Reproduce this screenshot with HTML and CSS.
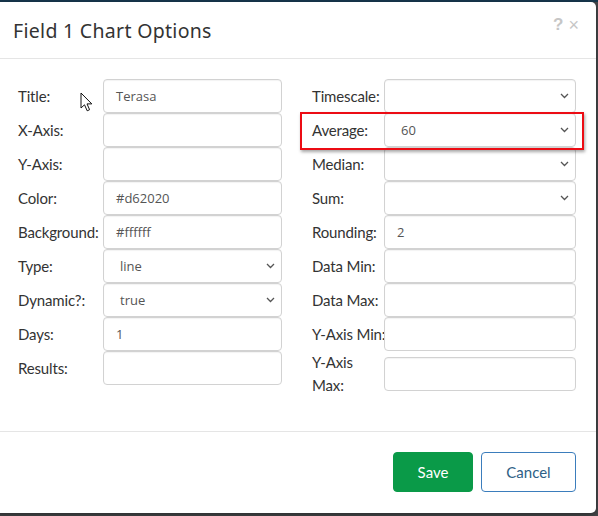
FILE: index.html
```html
<!DOCTYPE html>
<html>
<head>
<meta charset="utf-8">
<link rel="stylesheet" href="styles.css">
</head>
<body>
<div class="page">
  <div class="modal">
    <div class="modal-header">
      <h4 class="modal-title">Field 1 Chart Options</h4>
      <div class="tools"><span class="help">?</span><span class="close">×</span></div>
    </div>
    <div class="modal-body">
      <div class="col col-left">
        <div class="row"><label>Title:</label><div class="input">Terasa</div></div>
        <div class="row"><label>X-Axis:</label><div class="input"></div></div>
        <div class="row"><label>Y-Axis:</label><div class="input"></div></div>
        <div class="row"><label>Color:</label><div class="input">#d62020</div></div>
        <div class="row"><label>Background:</label><div class="input">#ffffff</div></div>
        <div class="row"><label>Type:</label><div class="select"><span>line</span><svg class="chev" width="9" height="6" viewBox="0 0 9 6"><path d="M1 1 L4.5 4.5 L8 1" fill="none" stroke="#555" stroke-width="1.3"/></svg></div></div>
        <div class="row"><label>Dynamic?:</label><div class="select"><span>true</span><svg class="chev" width="9" height="6" viewBox="0 0 9 6"><path d="M1 1 L4.5 4.5 L8 1" fill="none" stroke="#555" stroke-width="1.3"/></svg></div></div>
        <div class="row"><label>Days:</label><div class="input">1</div></div>
        <div class="row"><label>Results:</label><div class="input"></div></div>
      </div>
      <div class="col col-right">
        <div class="row"><label>Timescale:</label><div class="select"><span></span><svg class="chev" width="9" height="6" viewBox="0 0 9 6"><path d="M1 1 L4.5 4.5 L8 1" fill="none" stroke="#555" stroke-width="1.3"/></svg></div></div>
        <div class="row"><label>Average:</label><div class="select"><span>60</span><svg class="chev" width="9" height="6" viewBox="0 0 9 6"><path d="M1 1 L4.5 4.5 L8 1" fill="none" stroke="#555" stroke-width="1.3"/></svg></div></div>
        <div class="row"><label>Median:</label><div class="select"><span></span><svg class="chev" width="9" height="6" viewBox="0 0 9 6"><path d="M1 1 L4.5 4.5 L8 1" fill="none" stroke="#555" stroke-width="1.3"/></svg></div></div>
        <div class="row"><label>Sum:</label><div class="select"><span></span><svg class="chev" width="9" height="6" viewBox="0 0 9 6"><path d="M1 1 L4.5 4.5 L8 1" fill="none" stroke="#555" stroke-width="1.3"/></svg></div></div>
        <div class="row"><label>Rounding:</label><div class="input">2</div></div>
        <div class="row"><label>Data Min:</label><div class="input"></div></div>
        <div class="row"><label>Data Max:</label><div class="input"></div></div>
        <div class="row"><label>Y-Axis Min:</label><div class="input"></div></div>
        <div class="row"><label>Y-Axis<br>Max:</label><div class="input"></div></div>
      </div>
    </div>
    <div class="modal-footer">
      <button class="btn btn-save">Save</button>
      <button class="btn btn-cancel">Cancel</button>
    </div>
  </div>
  <div class="highlight"></div>
  <svg class="cursor" width="14" height="21" viewBox="0 0 14 21"><path d="M1 1 L1 16 L4.5 12.8 L7.2 18.8 L9.6 17.7 L7 11.9 L11.8 11.9 Z" fill="#fff" stroke="#111" stroke-width="1" stroke-linejoin="round"/></svg>
</div>
</body>
</html>
```

FILE: styles.css
```css
* { box-sizing: border-box; }
html, body { margin: 0; padding: 0; }
body {
  width: 598px;
  height: 516px;
  overflow: hidden;
  background: #45474a;
}
.page {
  position: relative;
  height: 516px;
  border-top: 2px solid #17384e;
  background: #45474a;
}
.modal {
  margin: 0 2px 0 -6px;
  height: 511px;
  background: #fff;
  border-radius: 5px;
  display: flex;
  flex-direction: column;
  box-shadow: 0 2px 6px rgba(0,0,0,0.4);
}
.modal-header {
  height: 57px;
  border-bottom: 1px solid #e5e5e5;
  display: flex;
  align-items: center;
  justify-content: space-between;
  padding: 0 17px 0 19px;
}
.modal-title {
  margin: 0;
  font-family: "Noto Sans", sans-serif;
  font-weight: 400;
  font-size: 19.5px;
  color: #333;
  letter-spacing: 0.3px;
}
.tools {
  display: flex;
  align-items: center;
  gap: 5px;
  color: #c6c6c6;
  font-family: "Liberation Sans", sans-serif;
  margin-top: -10px;
}
.help { font-size: 17px; font-weight: bold; }
.close { font-size: 18px; }
.modal-body {
  height: 373px;
  border-bottom: 1px solid #e5e5e5;
  padding: 20px 20px 0 24px;
  display: flex;
  gap: 30px;
}
.col { width: 264px; display: flex; flex-direction: column; }
.row {
  display: flex;
  align-items: center;
  min-height: 34px;
}
label {
  font-family: "Lato", sans-serif;
  font-size: 15px;
  line-height: 22.5px;
  color: #333;
  white-space: nowrap;
  letter-spacing: -0.15px;
}
.col-left label { width: 85px; }
.col-right label { width: 72px; }
.input, .select {
  flex: 1;
  height: 34px;
  border: 1px solid #d2d2d2;
  border-radius: 4px;
  box-shadow: inset 0 1px 1px rgba(0,0,0,0.05);
  font-family: "Open Sans", sans-serif;
  font-size: 13px;
  color: #555;
  display: flex;
  align-items: center;
  padding-left: 12px;
}
.select {
  justify-content: space-between;
  padding-left: 16px;
  padding-right: 6px;
}
.chev { display: block; }
.modal-footer {
  flex: 1;
  display: flex;
  justify-content: flex-end;
  align-items: flex-start;
  gap: 8px;
  padding: 20px 20px 0 0;
}
.btn {
  height: 40px;
  border-radius: 4px;
  font-family: "Lato", sans-serif;
  font-size: 15px;
  cursor: pointer;
}
.btn-save {
  width: 80px;
  background: #0a9a48;
  border: 1px solid #0a9a48;
  color: #fff;
}
.btn-cancel {
  width: 95px;
  background: #fff;
  border: 1px solid #3b7dbc;
  color: #2e5f86;
}
.highlight {
  position: absolute;
  left: 300px;
  top: 110px;
  width: 284px;
  height: 38px;
  border: 2px solid #ec0c14;
  box-shadow: 1px 2px 3px rgba(0,0,0,0.35);
}
.cursor {
  position: absolute;
  left: 80px;
  top: 90px;
}
```
